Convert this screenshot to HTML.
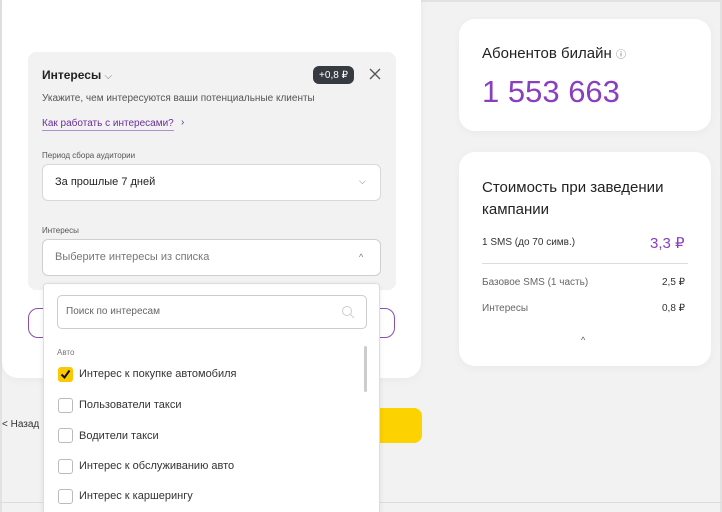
<!DOCTYPE html>
<html><head><meta charset="utf-8"><style>
*{box-sizing:border-box;margin:0;padding:0}
html,body{width:722px;height:512px;overflow:hidden}
body{background:#f2f2f2;font-family:"Liberation Sans",sans-serif;position:relative;color:#222}
.abs{position:absolute}
.frame{left:0;top:0;width:722px;height:512px;border:2px solid #e2e2e2;border-bottom:none}
.card{background:#fff;border-radius:16px;box-shadow:0 2px 10px rgba(0,0,0,.04)}
.t{position:absolute;white-space:nowrap}
</style></head><body>
<div class="abs frame"></div>
<div class="abs" style="left:0;top:502px;width:722px;height:1px;background:#ddd"></div>
<div class="abs card" style="left:2px;top:-20px;width:419px;height:398px"></div>
<div class="abs" style="left:28px;top:52px;width:368px;height:238px;background:#f2f2f2;border-radius:8px"></div>
<div class="t" style="left:42px;top:68px;font-size:12px;font-weight:bold">Интересы <span style="font-weight:normal;color:#777;font-size:10px">⌵</span></div>
<div class="abs" style="left:313px;top:66px;width:41px;height:18px;background:#353b41;border-radius:6px"></div>
<div class="t" style="left:313px;top:70px;width:41px;text-align:center;color:#fff;font-size:10px;line-height:11px">+0,8 ₽</div>
<svg class="abs" style="left:369px;top:68px" width="12" height="12"><path d="M1 1L11 11M11 1L1 11" stroke="#555" stroke-width="1.3"/></svg>
<div class="t" style="left:42px;top:93px;font-size:10px;color:#555">Укажите, чем интересуются ваши потенциальные клиенты</div>
<div class="t" style="left:42px;top:117px;font-size:10px;color:#6a2f9a;border-bottom:1px solid #b48fd0;line-height:13px">Как работать с интересами?</div>
<div class="t" style="left:181px;top:117px;font-size:10px;color:#6a2f9a">›</div>
<div class="t" style="left:42px;top:151px;font-size:8px;color:#555">Период сбора аудитории</div>
<div class="abs" style="left:42px;top:164px;width:339px;height:37px;background:#fff;border:1px solid #d8d8d8;border-radius:6px"></div>
<div class="t" style="left:55px;top:176px;font-size:11px;color:#222">За прошлые 7 дней</div>
<div class="t" style="left:359px;top:176px;font-size:9px;color:#777">⌵</div>
<div class="t" style="left:42px;top:226px;font-size:8px;color:#555">Интересы</div>
<div class="abs" style="left:42px;top:239px;width:339px;height:37px;background:#fff;border:1px solid #cfcfcf;border-radius:6px"></div>
<div class="t" style="left:55px;top:251px;font-size:11px;color:#777">Выберите интересы из списка</div>
<div class="t" style="left:359px;top:252px;font-size:9px;color:#777">^</div>
<div class="abs" style="left:28px;top:308px;width:367px;height:30px;border:1px solid #8b4fb0;border-radius:10px"></div>
<div class="abs" style="left:360px;top:408px;width:62px;height:35px;background:#fcd200;border-radius:8px"></div>
<div class="t" style="left:2px;top:419px;font-size:10px;color:#333">&lt; Назад</div>
<div class="abs" style="left:43px;top:283px;width:337px;height:229px;background:#fff;border:1px solid #ddd;border-bottom:none;border-radius:4px 4px 0 0;box-shadow:0 2px 6px rgba(0,0,0,.08)"></div>
<div class="abs" style="left:57px;top:295px;width:310px;height:34px;border:1px solid #ccc;border-radius:5px"></div>
<div class="t" style="left:66px;top:306px;font-size:10px;color:#666">Поиск по интересам</div>
<svg class="abs" style="left:341px;top:305px" width="14" height="14"><circle cx="6" cy="6" r="4.5" fill="none" stroke="#ccc" stroke-width="1"/><line x1="9.5" y1="9.5" x2="13" y2="13" stroke="#ccc"/></svg>
<div class="t" style="left:57px;top:348px;font-size:8px;color:#777">Авто</div>
<div class="abs" style="left:364px;top:346px;width:3px;height:46px;background:#ccc;border-radius:2px"></div>
<div class="abs" style="left:58px;top:367px;width:15px;height:15px;background:#fcc800;border-radius:3px"></div>
<svg class="abs" style="left:58px;top:367px" width="15" height="15"><path d="M3.5 7.5 L6.5 10.5 L11.5 3.5" fill="none" stroke="#111" stroke-width="2"/></svg>
<div class="t" style="left:79px;top:368px;font-size:11px;color:#333">Интерес к покупке автомобиля</div>
<div class="abs" style="left:58px;top:398px;width:15px;height:15px;border:1px solid #bbb;border-radius:3px"></div>
<div class="t" style="left:79px;top:399px;font-size:11px;color:#333">Пользователи такси</div>
<div class="abs" style="left:58px;top:428px;width:15px;height:15px;border:1px solid #bbb;border-radius:3px"></div>
<div class="t" style="left:79px;top:430px;font-size:11px;color:#333">Водители такси</div>
<div class="abs" style="left:58px;top:459px;width:15px;height:15px;border:1px solid #bbb;border-radius:3px"></div>
<div class="t" style="left:79px;top:460px;font-size:11px;color:#333">Интерес к обслуживанию авто</div>
<div class="abs" style="left:58px;top:489px;width:15px;height:15px;border:1px solid #bbb;border-radius:3px"></div>
<div class="t" style="left:79px;top:490px;font-size:11px;color:#333">Интерес к каршерингу</div>
<div class="abs card" style="left:459px;top:19px;width:252px;height:112px"></div>
<div class="t" style="left:482px;top:45px;font-size:15px;color:#222">Абонентов билайн <span style="font-size:10px;color:#777">ⓘ</span></div>
<div class="t" style="left:482px;top:74px;font-size:31px;color:#8a3fc0">1 553 663</div>
<div class="abs card" style="left:459px;top:152px;width:252px;height:214px"></div>
<div class="t" style="left:482px;top:177px;font-size:15px;line-height:22px;color:#222">Стоимость при заведении<br>кампании</div>
<div class="t" style="left:482px;top:237px;font-size:10px;color:#333">1 SMS (до 70 симв.)</div>
<div class="t" style="left:650px;top:234px;font-size:15px;color:#8a3fc0">3,3 ₽</div>
<div class="abs" style="left:482px;top:263px;width:206px;height:1px;background:#ddd"></div>
<div class="t" style="left:482px;top:277px;font-size:10px;color:#666">Базовое SMS (1 часть)</div>
<div class="t" style="left:662px;top:277px;font-size:10px;color:#333">2,5 ₽</div>
<div class="t" style="left:482px;top:303px;font-size:10px;color:#666">Интересы</div>
<div class="t" style="left:662px;top:303px;font-size:10px;color:#333">0,8 ₽</div>
<div class="t" style="left:581px;top:335px;font-size:9px;color:#555">^</div>
</body></html>
